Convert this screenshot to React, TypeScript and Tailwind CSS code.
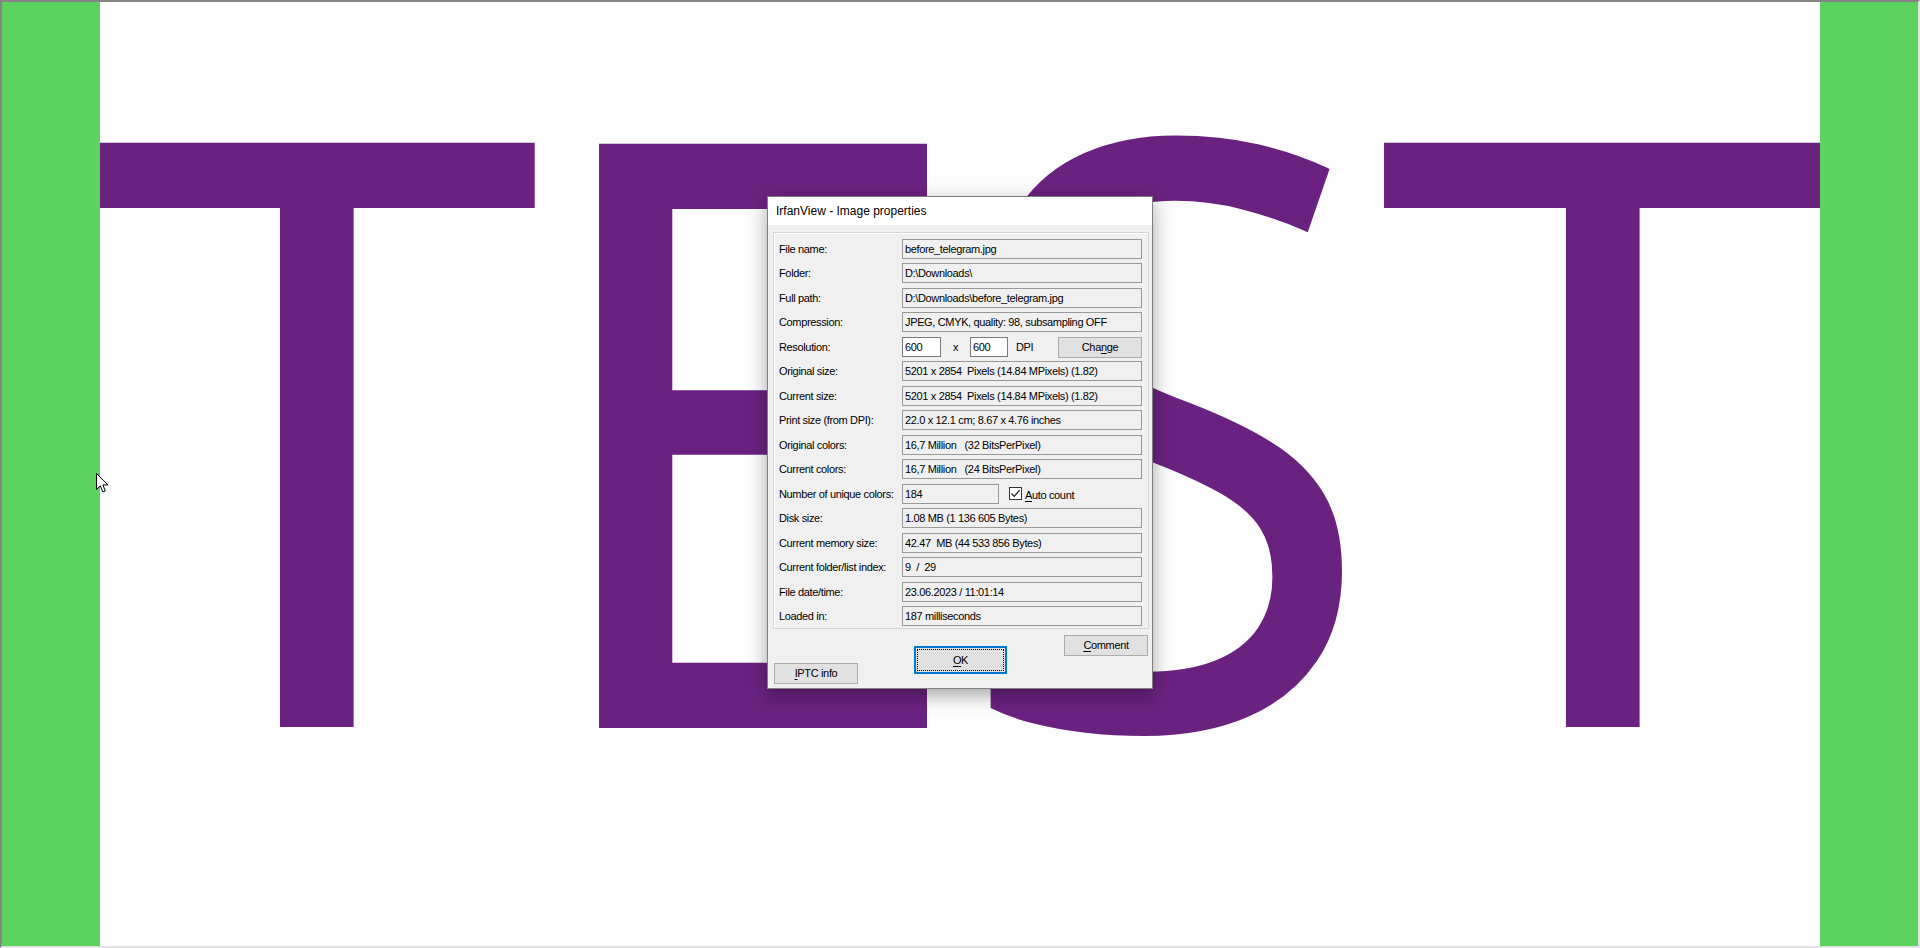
import React from "react";

type Row = { label: string; value?: string; kind?: "res" | "unique" };

const ROWS: Row[] = [
  { label: "File name:", value: "before_telegram.jpg" },
  { label: "Folder:", value: "D:\\Downloads\\" },
  { label: "Full path:", value: "D:\\Downloads\\before_telegram.jpg" },
  { label: "Compression:", value: "JPEG, CMYK, quality: 98, subsampling OFF" },
  { label: "Resolution:", kind: "res" },
  { label: "Original size:", value: "5201 x 2854  Pixels (14.84 MPixels) (1.82)" },
  { label: "Current size:", value: "5201 x 2854  Pixels (14.84 MPixels) (1.82)" },
  { label: "Print size (from DPI):", value: "22.0 x 12.1 cm; 8.67 x 4.76 inches" },
  { label: "Original colors:", value: "16,7 Million   (32 BitsPerPixel)" },
  { label: "Current colors:", value: "16,7 Million   (24 BitsPerPixel)" },
  { label: "Number of unique colors:", kind: "unique" },
  { label: "Disk size:", value: "1.08 MB (1 136 605 Bytes)" },
  { label: "Current memory size:", value: "42.47  MB (44 533 856 Bytes)" },
  { label: "Current folder/list index:", value: "9  /  29" },
  { label: "File date/time:", value: "23.06.2023 / 11:01:14" },
  { label: "Loaded in:", value: "187 milliseconds" },
];

const fieldCls = "h-[20px] border pl-[2px] leading-[18px] whitespace-pre overflow-hidden";
const btnCls = "flex items-center justify-center border border-[#adadad] bg-[#e1e1e1] leading-none";

function Field({ value, w = "w-[240px]", white }: { value: string; w?: string; white?: boolean }) {
  return (
    <div className={`${fieldCls} ${w} ${white ? "bg-white border-[#7a7a7a]" : "bg-[#f0f0f0] border-[#999]"}`}>
      {value}
    </div>
  );
}

function PropRow({ row }: { row: Row }) {
  return (
    <div className="flex h-[20px] items-start">
      <span className="w-[123px] shrink-0 leading-[20px] whitespace-nowrap">{row.label}</span>
      {row.kind === "res" && (
        <>
          <Field value="600" w="w-[39px]" white />
          <span className="w-[29px] pl-[12px] leading-[20px]">x</span>
          <Field value="600" w="w-[38px]" white />
          <span className="w-[50px] pl-[8px] leading-[20px]">DPI</span>
          <div className={`${btnCls} h-[21px] w-[84px]`}>
            <span>
              Cha<u className="underline-offset-2">n</u>ge
            </span>
          </div>
        </>
      )}
      {row.kind === "unique" && (
        <>
          <Field value="184" w="w-[97px]" />
          <div className="ml-[10px] mt-[3px] h-[13px] w-[13px] border border-[#333] bg-white">
            <svg width="11" height="11" viewBox="0 0 11 11">
              <path d="M1.5 5.5 L4.2 8.3 L9.6 2.2" fill="none" stroke="#222" strokeWidth="1.2" />
            </svg>
          </div>
          <span className="ml-[3px] mt-[1px] leading-[20px]">
            <u className="underline-offset-2">A</u>uto count
          </span>
        </>
      )}
      {!row.kind && <Field value={row.value ?? ""} />}
    </div>
  );
}

function Cursor() {
  return (
    <svg width="13" height="21" viewBox="0 0 13 21">
      <path d="M0.5 0.5 L0.5 16.5 L4.3 12.8 L6.8 19 L9.3 18 L6.9 11.9 L12 11.9 Z" fill="#fff" stroke="#000" strokeWidth="1" />
    </svg>
  );
}

function PropertiesDialog() {
  return (
    <div className="absolute left-[765px] top-[194px] z-20 flex h-[493px] w-[386px] flex-col border border-[#7f7f7f] bg-[#f0f0f0] font-['Liberation_Sans',Arial,sans-serif] text-[11px] tracking-[-0.35px] text-black shadow-[0_6px_18px_rgba(0,0,0,0.35)]">
      {/* title bar */}
      <div className="flex h-[28px] shrink-0 items-center bg-white pl-[8px] text-[12px] tracking-normal">
        IrfanView - Image properties
      </div>

      {/* properties group */}
      <div className="ml-[5px] mt-[7px] flex h-[397px] w-[376px] flex-col gap-[4.47px] border border-[#d5d5d5] pl-[5px] pr-[6px] pt-[6px] shadow-[inset_1px_1px_0_#fff]">
        {ROWS.map((r) => (
          <PropRow key={r.label} row={r} />
        ))}
      </div>

      {/* buttons */}
      <div className="flex h-[59px] items-start">
        <div className={`${btnCls} ml-[6px] mt-[34px] h-[21px] w-[84px]`}>
          <span>
            <u className="underline-offset-2">I</u>PTC info
          </span>
        </div>
        <div className="ml-[56px] mt-[17px] flex h-[28px] w-[93px] border-2 border-[#0078d7] bg-[#e1e1e1] p-[1px]">
          <div className="flex flex-1 items-center justify-center border border-dotted border-black">
            <span>
              <u className="underline-offset-2">O</u>K
            </span>
          </div>
        </div>
        <div className={`${btnCls} ml-[57px] mt-[6px] h-[21px] w-[84px]`}>
          <span>
            <u className="underline-offset-2">C</u>omment
          </span>
        </div>
      </div>
    </div>
  );
}

export default function App() {
  return (
    <div className="relative flex h-[948px] w-[1920px] overflow-hidden border-2 border-l-[#858585] border-t-[#858585] border-r-[#e3e3e3] border-b-[#e3e3e3] bg-[#fdfdfd]">
      {/* image content */}
      <svg className="absolute left-0 top-0" width="1916" height="944" viewBox="2 2 1916 944">
        <g
          fill="#6a2280"
          stroke="#6a2280"
          strokeWidth="6"
          fontFamily="'Open Sans', sans-serif"
          fontSize="810"
          textAnchor="middle"
        >
          <text x="317" y="724">T</text>
          <text x="748" y="725">E</text>
          <text x="1165" y="725" transform="translate(1165 0) scale(0.95 1) translate(-1165 0)">
            S
          </text>
          <text x="1603" y="724">T</text>
        </g>
      </svg>
      <div className="relative z-10 w-[98px] shrink-0 bg-[#5bd35e]" />
      <div className="flex-1" />
      <div className="relative z-10 w-[98px] shrink-0 bg-[#5bd35e]" />

      <PropertiesDialog />

      <div className="absolute left-[94px] top-[471px] z-30">
        <Cursor />
      </div>
    </div>
  );
}
